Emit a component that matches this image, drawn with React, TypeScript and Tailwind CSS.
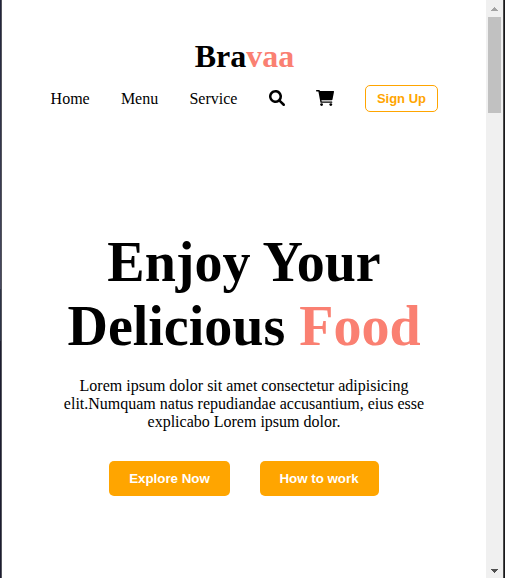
import type { ReactNode } from 'react';

function NavLink({ children }: { children: ReactNode }) {
  return <a className="leading-[18px]">{children}</a>;
}

function SearchIcon() {
  return (
    <svg className="mb-[2px] size-4" viewBox="0 0 512 512" fill="currentColor">
      <path d="M500.3 443.7l-119.7-119.7c27.22-40.41 40.65-90.9 33.46-144.7C401.8 87.79 326.8 13.32 235.2 1.723C99.01-15.51-15.51 99.01 1.724 235.2c11.6 91.64 86.08 166.7 177.6 178.9c53.8 7.189 104.3-6.236 144.7-33.46l119.7 119.7c15.62 15.62 40.95 15.62 56.57 0C515.9 484.7 515.9 459.3 500.3 443.7zM79.1 208c0-70.58 57.42-128 128-128s128 57.42 128 128c0 70.58-57.42 128-128 128S79.1 278.6 79.1 208z" />
    </svg>
  );
}

function CartIcon() {
  return (
    <svg className="mb-[2px] h-4 w-[18px]" viewBox="0 0 18 16" fill="currentColor">
      <path d="M.6 0H3.2Q3.7 0 3.8.6L3.9 .9H17.4Q18.2 .9 18 1.8L16.5 9.5Q16.3 10.3 15.6 10.3H5.4L5.7 11.6H15.8Q16.3 11.6 16.3 12.2T15.8 12.8H5Q4.5 12.8 4.4 12.2L2.4 1.4H.6Q0 1.4 0 .7T.6 0Z" />
      <circle cx="5.6" cy="14.6" r="1.4" />
      <circle cx="14.8" cy="14.6" r="1.4" />
    </svg>
  );
}

function Header() {
  return (
    <header className="flex flex-col items-center pt-[38px]">
      <div className="pl-px text-[32px] font-bold leading-[37px]">
        Bra<span className="text-[#fa8072]">vaa</span>
      </div>
      <nav className="mt-[10px] flex h-[27px] w-[388px] items-center justify-between pl-[0.6px] text-base">
        <NavLink>Home</NavLink>
        <NavLink>Menu</NavLink>
        <NavLink>Service</NavLink>
        <SearchIcon />
        <CartIcon />
        <button className="h-[27px] w-[73px] rounded-[5px] border border-[#ffa500] font-['Liberation_Sans',Arial,sans-serif] text-[13px] font-bold leading-[15px] text-[#ffa500]">
          Sign Up
        </button>
      </nav>
    </header>
  );
}

function Hero() {
  return (
    <section className="flex flex-col items-center pt-[118px] text-center">
      <h1 className="text-[56px] font-bold leading-[64px]">
        Enjoy Your
        <br />
        Delicious <span className="text-[#fa8072]">Food</span>
      </h1>
      <p className="mt-[19px] text-base leading-[18px]">
        Lorem ipsum dolor sit amet consectetur adipisicing
        <br />
        elit.Numquam natus repudiandae accusantium, eius esse
        <br />
        explicabo Lorem ipsum dolor.
      </p>
      <div className="mt-[30px] flex gap-[30px] font-['Liberation_Sans',Arial,sans-serif] text-[13.33px] font-bold leading-[15px] text-white">
        <button className="h-[35px] w-[121px] rounded-[5px] bg-[#ffa500]">Explore Now</button>
        <button className="h-[35px] w-[119px] rounded-[5px] bg-[#ffa500] pr-px">How to work</button>
      </div>
    </section>
  );
}

function Scrollbar() {
  return (
    <div className="flex w-[17px] flex-col items-center bg-[#f0f0f0]">
      <svg className="h-[17px] w-[17px] shrink-0" viewBox="0 0 17 17" shapeRendering="crispEdges">
        <path d="M8 7h1v1h1v1h1v1h1v1H5v-1h1V9h1V8h1z" fill="#a3a3a3" />
      </svg>
      <div className="h-24 w-[13px] bg-[#c1c1c1]" />
      <svg className="mt-auto h-[17px] w-[17px] shrink-0" viewBox="0 0 17 17" shapeRendering="crispEdges">
        <path d="M5 8h7v1h-1v1h-1v1H9v1H8v-1H7v-1H6V9H5z" fill="#505050" />
      </svg>
    </div>
  );
}

export default function App() {
  return (
    <div className="flex h-[578px] w-[505px] overflow-hidden bg-white font-['Liberation_Serif','Times_New_Roman',serif] text-black">
      <div className="flex w-[2px] shrink-0">
        <div className="w-px bg-[linear-gradient(#20233a_0%,#484a60_50%,#2c3346_50%,#2c3346_59%,#1c1c30_59%)]" />
        <div className="w-px bg-[#55565e]" />
      </div>
      <main className="w-[484px] shrink-0">
        <Header />
        <Hero />
      </main>
      <Scrollbar />
      <div className="w-px bg-[#4a4a4a]" />
      <div className="w-px bg-[#18181b]" />
    </div>
  );
}
